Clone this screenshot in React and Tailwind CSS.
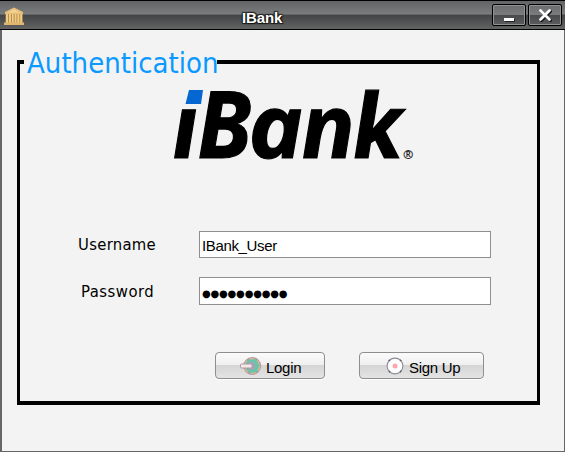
import React from "react";

function BankIcon() {
  return (
    <svg width="20" height="20" viewBox="0 0 20 20" className="block">
      <path d="M10 0.5 L19 5 V7 H1 V5 Z" fill="#e6c07a" />
      <path d="M4 5.5 L10 2.5 L16 5.5 Z" fill="#f3d596" />
      <rect x="1.5" y="7" width="17" height="9" fill="#b98d45" />
      <rect x="2" y="7" width="2" height="9" fill="#eecb86" />
      <rect x="5" y="7" width="2" height="9" fill="#eecb86" />
      <rect x="8" y="7" width="1.7" height="9" fill="#eecb86" />
      <rect x="10.7" y="7" width="1.7" height="9" fill="#eecb86" />
      <rect x="13.3" y="7" width="2" height="9" fill="#eecb86" />
      <rect x="16.2" y="7" width="2" height="9" fill="#eecb86" />
      <rect x="0" y="15.5" width="20" height="2.5" fill="#e0b76c" />
    </svg>
  );
}

function Logo() {
  return (
    <svg
      width="250"
      height="80"
      viewBox="0 0 250 80"
      className="block overflow-visible"
      fontFamily="'Open Sans', 'Noto Sans', sans-serif"
      fontWeight="700"
      fontStyle="italic"
      fontSize="95"
    >
      <path d="M22 6 H36 L34 20 H18.5 Z" fill="#0568d2" />
      <text transform="translate(6 73.5) skewX(3) scale(0.94 0.93)" stroke="#000" strokeWidth="1.2">ı</text>
      <text transform="translate(30.5 73.5) skewX(2) scale(0.94 0.98)" stroke="#000" strokeWidth="1.2">B</text>
      <text transform="translate(82.5 73.5) skewX(3) scale(0.98 0.93)" stroke="#000" strokeWidth="1.2">a</text>
      <text transform="translate(135 73.5) skewX(3) scale(0.95 0.93)" stroke="#000" strokeWidth="1.2">n</text>
      <text transform="translate(186.5 73.5) skewX(3) scale(0.93 0.94)" stroke="#000" strokeWidth="1.2">k</text>
      <text x="236" y="75" fontSize="12.5" fontStyle="normal" fill="#222">®</text>
    </svg>
  );
}

function LoginIcon() {
  return (
    <svg width="22" height="20" viewBox="0 0 22 20" className="block">
      <circle cx="12.2" cy="10" r="8.2" fill="#68c5aa" stroke="#b39aa6" strokeWidth="1.6" />
      <circle cx="12.2" cy="10" r="7.4" fill="none" stroke="#e5b78b" strokeWidth="1.2" strokeDasharray="5 3" />
      <circle cx="11" cy="10" r="4.2" fill="#a7a3b5" />
      <rect x="0.5" y="8" width="11.5" height="4" rx="1" fill="#f5e9e6" stroke="#ad9ba9" />
    </svg>
  );
}

function SignUpIcon() {
  return (
    <svg width="18" height="18" viewBox="0 0 18 18" className="block">
      <circle cx="9" cy="9" r="7.9" fill="#fdfdfd" stroke="#8c8c97" strokeWidth="1.1" />
      <circle cx="9" cy="9" r="7.9" fill="none" stroke="#55555f" strokeWidth="1.3" strokeDasharray="2 10.4" strokeDashoffset="-5" />
      <circle cx="9" cy="9" r="2.5" fill="#ffa7b0" />
    </svg>
  );
}

function TitleButton({ children, label }) {
  return (
    <button
      aria-label={label}
      className="h-[22px] w-[34px] rounded-[2px] border border-black bg-[linear-gradient(#6b6c6d_0,#7b7c7d_48%,#47494a_50%,#5c5d5e_100%)] shadow-[inset_0_0_0_1px_#929292]"
    >
      {children}
    </button>
  );
}

function FormButton({ children, className }) {
  return (
    <button
      className={
        "flex h-[27px] items-center rounded-[4px] border border-[#8e8e8e] bg-[linear-gradient(#fbfbfb_0,#efefef_48%,#d5d5d5_50%,#e4e4e4_100%)] font-['Liberation_Sans',Arial,sans-serif] text-[15px] leading-none tracking-[-0.3px] whitespace-nowrap text-black shadow-[0_1px_1px_#fff] " +
        className
      }
    >
      {children}
    </button>
  );
}

export default function App() {
  return (
    <div className="flex h-[452px] w-[565px] flex-col overflow-hidden bg-[#666]">
      <header className="flex h-[30px] border-y border-black bg-[linear-gradient(#636465_0,#7b7c7d_47%,#424445_50%,#626363_100%)]">
        <div className="w-[242px] pt-[6px] pl-[4px]">
          <BankIcon />
        </div>
        <div className="w-[249px] pt-[8px] font-['Liberation_Sans',Arial,sans-serif] text-[15px] leading-[18px] font-bold tracking-[-0.15px] text-white [text-shadow:1px_1px_1px_#111,-1px_-1px_1px_#222,1px_-1px_1px_#222,-1px_1px_1px_#222]">
          IBank
        </div>
        <div className="flex gap-[2px] pt-[3px] pl-[1px]">
          <TitleButton label="Minimize">
            <svg width="32" height="20" viewBox="0 0 32 20">
              <rect x="12" y="14" width="10" height="3" fill="#222" />
              <rect x="11" y="13" width="10" height="3" fill="#fff" />
            </svg>
          </TitleButton>
          <TitleButton label="Close">
            <svg width="32" height="20" viewBox="0 0 32 20" strokeLinecap="round">
              <path d="M12.5 6.5 L21.5 15.5 M21.5 6.5 L12.5 15.5" stroke="#111" strokeWidth="3" />
              <path d="M11.5 5.5 L20.5 14.5 M20.5 5.5 L11.5 14.5" stroke="#fff" strokeWidth="2.8" />
            </svg>
          </TitleButton>
        </div>
      </header>
      <main className="mr-px mb-px ml-[2px] grow bg-[#f3f3f3] pt-[14px] pl-[15px]">
        <fieldset className="h-[361px] w-[523px] border-x-[3px] border-y-[4px] border-black">
          <legend className="ml-[4px] h-[36px] w-[193px] pl-[3px] font-['DejaVu_Sans_Condensed','DejaVu_Sans',sans-serif] text-[29px] leading-[38px] whitespace-nowrap text-[#0a99ff]">
            Authentication
          </legend>
          <div className="ml-[147px] h-[80px] pt-[4px]">
            <Logo />
          </div>
          <div className="mt-[71px] flex h-[27px] items-center">
            <label className="w-[179px] pt-px pl-[58px] font-['DejaVu_Sans_Condensed','DejaVu_Sans',sans-serif] text-[16.5px] tracking-[0.3px] text-black">Username</label>
            <div className="flex h-[27px] w-[292px] items-center border border-[#8e8e8e] bg-white pt-[3px] pl-[2px] font-['Liberation_Sans',Arial,sans-serif] text-[15px] tracking-[-0.35px] text-black">
              IBank_User
            </div>
          </div>
          <div className="mt-[19px] flex h-[28px] items-center">
            <label className="w-[179px] pt-[3px] pl-[61px] font-['DejaVu_Sans_Condensed','DejaVu_Sans',sans-serif] text-[16.5px] tracking-[0.5px] text-black">Password</label>
            <div className="flex h-[28px] w-[292px] items-center border border-[#8e8e8e] bg-white pt-[5px] pl-[2px] font-['DejaVu_Sans',sans-serif] text-[10px] tracking-[-0.2px] text-black">
              ●●●●●●●●●●
            </div>
          </div>
          <div className="mt-[47px] ml-[195px] flex gap-[34px]">
            <FormButton className="w-[110px] gap-[4px] pl-[24px]">
              <LoginIcon />
              <span className="pt-[3px]">Login</span>
            </FormButton>
            <FormButton className="w-[125px] gap-[5px] pl-[26px]">
              <SignUpIcon />
              <span className="pt-[3px]">Sign Up</span>
            </FormButton>
          </div>
        </fieldset>
      </main>
    </div>
  );
}
